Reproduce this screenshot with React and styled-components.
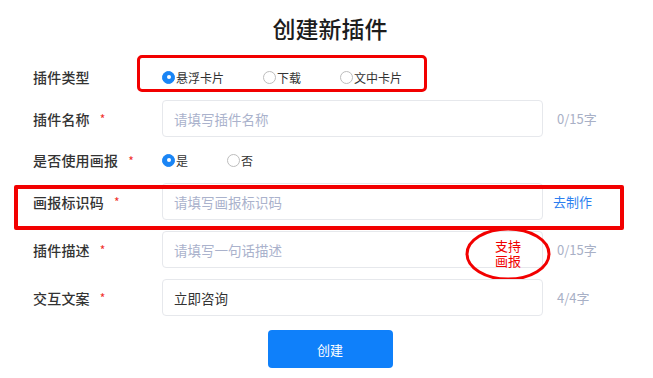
import React from "react";
import styled, { createGlobalStyle } from "styled-components";

const GlobalStyle = createGlobalStyle`
  html, body {
    margin: 0;
    padding: 0;
    background: #ffffff;
  }
  body {
    font-family: "Noto Sans CJK SC", "Noto Sans", sans-serif;
  }
`;

export default function App() {
  return (
    <>
      <GlobalStyle />
      <Page>
        <Title>创建新插件</Title>
        <Form>
          <Row>
            <Label>插件类型</Label>
            <RadioGroup>
              <Radio checked>悬浮卡片</Radio>
              <Radio>下载</Radio>
              <Radio>文中卡片</Radio>
            </RadioGroup>
            <RedBox $left={104} $top={-10} $width={290} $height={37} $thick={3} $radius={5} />
          </Row>

          <Row $input>
            <Label>
              插件名称<Star>*</Star>
            </Label>
            <Input placeholder="请填写插件名称" />
            <Counter>0/15字</Counter>
          </Row>

          <Row>
            <Label>
              是否使用画报<Star>*</Star>
            </Label>
            <RadioGroup>
              <Radio checked>是</Radio>
              <Radio>否</Radio>
            </RadioGroup>
          </Row>

          <Row $input>
            <Label>
              画报标识码<Star>*</Star>
            </Label>
            <Input placeholder="请填写画报标识码" />
            <MakeLink>去制作</MakeLink>
            <RedBox $left={-19} $top={2} $width={610} $height={45} $thick={4} $radius={2} />
          </Row>

          <Row $input>
            <Label>
              插件描述<Star>*</Star>
            </Label>
            <Input placeholder="请填写一句话描述" />
            <Counter>0/15字</Counter>
            <Note>
              <svg width="86" height="54" viewBox="0 0 86 54">
                <ellipse cx="43" cy="27" rx="41" ry="25" fill="none" stroke="#f20000" strokeWidth="3" />
              </svg>
              <NoteText>
                支持
                <br />
                画报
              </NoteText>
            </Note>
          </Row>

          <Row $input>
            <Label>
              交互文案<Star>*</Star>
            </Label>
            <Input defaultValue="立即咨询" />
            <Counter>4/4字</Counter>
          </Row>
        </Form>
        <Footer>
          <Button>创建</Button>
        </Footer>
      </Page>
    </>
  );
}

const Radio = ({ checked, children }) => (
  <RadioItem>
    <Dot $checked={checked} />
    {children}
  </RadioItem>
);

const Page = styled.div`
  width: 653px;
  height: 378px;
  padding-top: 12px;
  box-sizing: border-box;
  overflow: hidden;
  background: #ffffff;
`;

const Title = styled.h1`
  margin: 0;
  padding-left: 7px;
  text-align: center;
  font-size: 23px;
  line-height: 32px;
  font-weight: 500;
  color: #1c1c1c;
`;

const Form = styled.div`
  display: flex;
  flex-direction: column;
  gap: 11px;
  margin-top: 21px;
  padding-left: 33px;
`;

const Row = styled.div`
  position: relative;
  display: grid;
  grid-template-columns: 129px 381px auto;
  align-items: center;
  height: ${({ $input }) => ($input ? "37px" : "24px")};
`;

const Label = styled.div`
  display: flex;
  align-items: center;
  font-size: 14px;
  font-weight: 500;
  color: #333333;
  letter-spacing: 0.2px;
`;

const Star = styled.span`
  margin-left: 10px;
  color: #f0302a;
  font-size: 12px;
  font-weight: 400;
`;

const RadioGroup = styled.div`
  display: flex;
  align-items: center;
  grid-column: 2 / 4;
`;

const RadioItem = styled.label`
  display: inline-flex;
  align-items: center;
  gap: 1px;
  margin-right: 39px;
  font-size: 12px;
  color: #333333;
`;

const Dot = styled.span`
  position: relative;
  width: 13px;
  height: 13px;
  box-sizing: border-box;
  border-radius: 50%;
  border: 1px solid ${({ $checked }) => ($checked ? "#1a85f5" : "#bdbdbd")};
  background: ${({ $checked }) => ($checked ? "#1a85f5" : "#ffffff")};

  &::after {
    content: "";
    display: ${({ $checked }) => ($checked ? "block" : "none")};
    position: absolute;
    left: 50%;
    top: 50%;
    width: 4px;
    height: 4px;
    margin: -2px 0 0 -2px;
    border-radius: 50%;
    background: #ffffff;
  }
`;

const Input = styled.input`
  width: 381px;
  height: 37px;
  box-sizing: border-box;
  padding: 0 11px;
  border: 1px solid #e6e8ec;
  border-radius: 4px;
  outline: none;
  font-family: inherit;
  font-size: 13.5px;
  color: #333333;
  background: #ffffff;

  &::placeholder {
    color: #aab2cc;
  }
`;

const Counter = styled.span`
  padding-left: 14px;
  font-size: 13px;
  color: #a8b0c6;
`;

const MakeLink = styled.span`
  padding-left: 10px;
  font-size: 13px;
  color: #2c7ff0;
`;

const RedBox = styled.div`
  position: absolute;
  left: ${({ $left }) => $left}px;
  top: ${({ $top }) => $top}px;
  width: ${({ $width }) => $width}px;
  height: ${({ $height }) => $height}px;
  box-sizing: border-box;
  border: ${({ $thick }) => $thick}px solid #f20000;
  border-radius: ${({ $radius }) => $radius}px;
  pointer-events: none;
`;

const Note = styled.div`
  position: absolute;
  left: 432px;
  top: -4px;
  width: 86px;
  height: 54px;

  svg {
    position: absolute;
    left: 0;
    top: 0;
  }
`;

const NoteText = styled.div`
  position: relative;
  padding-top: 11px;
  text-align: center;
  font-size: 13px;
  line-height: 15px;
  color: #f00000;
`;

const Footer = styled.div`
  display: flex;
  justify-content: center;
  padding-left: 7px;
  margin-top: 14px;
`;

const Button = styled.button`
  width: 125px;
  height: 38px;
  border: none;
  border-radius: 4px;
  background: #0f80fa;
  color: #ffffff;
  font-family: inherit;
  font-size: 13px;
  cursor: pointer;
`;
